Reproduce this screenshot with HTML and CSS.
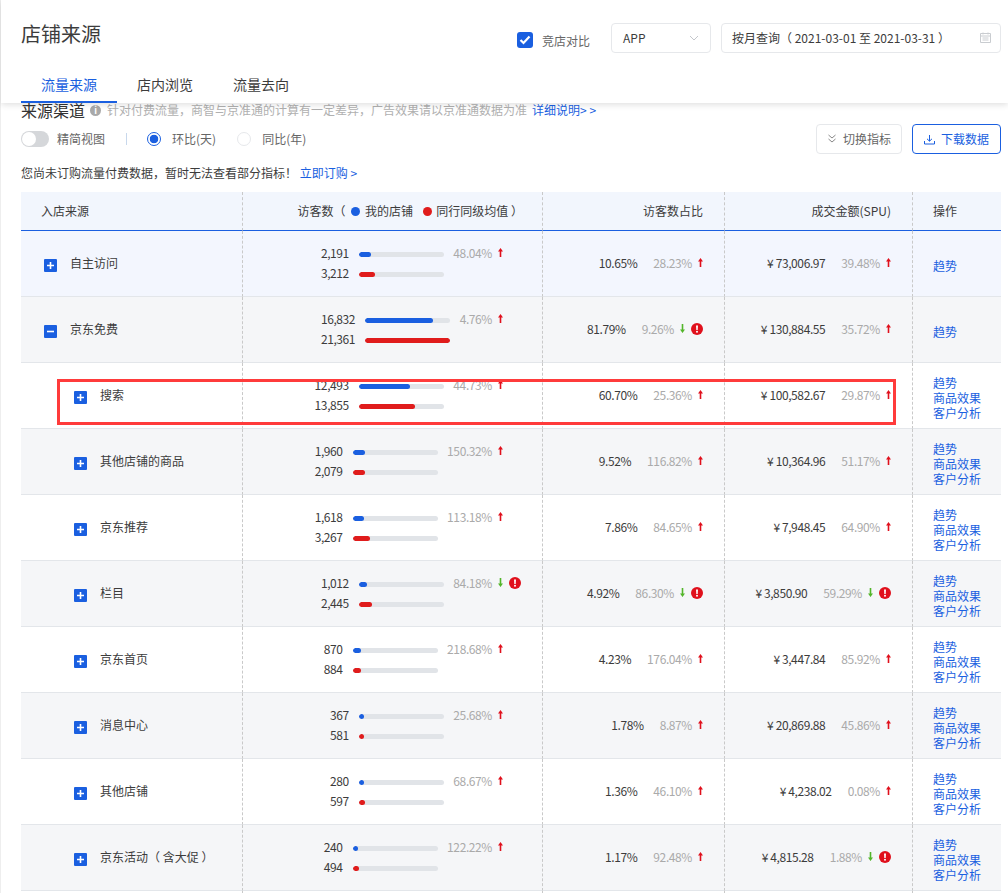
FILE: index.html
```html
<!DOCTYPE html>
<html lang="zh-CN">
<head>
    <meta charset="UTF-8">
    <title>店铺来源</title>
    <link rel="stylesheet" href="styles.css">
</head>
<body>
    <svg class="defs" width="0" height="0">
        <symbol id="up" viewBox="0 0 5 9"><path d="M2.5 0 5 3.4H3.3V9H1.7V3.4H0z" fill="#e0101c"/></symbol>
        <symbol id="down" viewBox="0 0 5 9"><path d="M2.5 9 5 5.6H3.3V0H1.7V5.6H0z" fill="#52b52a"/></symbol>
        <symbol id="alert" viewBox="0 0 12 12"><circle cx="6" cy="6" r="6" fill="#e0101c"/><path d="M5 2.4h2L6.7 7.1H5.3z" fill="#fff"/><circle cx="6" cy="8.8" r="1" fill="#fff"/></symbol>
        <symbol id="plus" viewBox="0 0 13 13"><rect width="13" height="13" rx="1" fill="#1a5fe0"/><path d="M3 6.5h7M6.5 3v7" stroke="#fff" stroke-width="1.6"/></symbol>
        <symbol id="minus" viewBox="0 0 13 13"><rect width="13" height="13" rx="1" fill="#1a5fe0"/><path d="M3 6.5h7" stroke="#fff" stroke-width="1.6"/></symbol>
    </svg>

    <header class="top">
        <div class="top-row">
            <h1>店铺来源</h1>
            <div class="filters">
                <span class="checkbox"><svg width="12" height="10" viewBox="0 0 12 10"><path d="M1.5 5 4.5 8l6-6.5" fill="none" stroke="#fff" stroke-width="2.2"/></svg></span>
                <span class="check-label">竞店对比</span>
                <div class="select">
                    <span>APP</span>
                    <svg width="10" height="6" viewBox="0 0 10 6"><path d="M1 1l4 4 4-4" fill="none" stroke="#c4c7cc"/></svg>
                </div>
                <div class="select date">
                    <span>按月查询（ 2021-03-01 至 2021-03-31 ）</span>
                    <svg width="11" height="11" viewBox="0 0 11 11"><path d="M.5 1.5h10v9H.5zM.5 4h10M2.5 6h6M2.5 8h6M3 .5v2M8 .5v2" fill="none" stroke="#c9ccd0"/></svg>
                </div>
            </div>
        </div>
        <nav class="tabs">
            <a class="tab active">流量来源</a>
            <a class="tab">店内浏览</a>
            <a class="tab">流量去向</a>
        </nav>
    </header>

    <main class="page">
        <div class="section-title">
            <h2>来源渠道</h2>
            <span class="info">i</span>
            <span class="hint">针对付费流量，商智与京准通的计算有一定差异，广告效果请以京准通数据为准</span>
            <a class="link">详细说明&gt; &gt;</a>
        </div>

        <div class="toolbar">
            <span class="switch"><i></i></span>
            <span class="opt-label">精简视图</span>
            <span class="sep"></span>
            <span class="radio on"></span>
            <span class="opt-label">环比(天)</span>
            <span class="radio"></span>
            <span class="opt-label">同比(年)</span>
            <div class="actions">
                <button class="btn">
                    <svg width="10" height="10" viewBox="0 0 10 10"><path d="M1.5 1 5 4l3.500-3M1.500 5 5 8l3.500-3" fill="none" stroke="#888"/></svg>
                    切换指标
                </button>
                <button class="btn primary">
                    <svg width="11" height="11" viewBox="0 0 11 11"><path d="M5.500 1v6M3 4.800l2.500 2.400L8 4.800M.5 7v3h10V7" fill="none" stroke="#1a5fe0"/></svg>
                    下载数据
                </button>
            </div>
        </div>

        <p class="notice">您尚未订购流量付费数据，暂时无法查看部分指标！ <a class="link">立即订购 &gt;</a></p>

        <div class="table-wrap">
            <table class="data">
                <colgroup><col class="c1"><col class="c2"><col class="c3"><col class="c4"><col class="c5"></colgroup>
                <thead>
                    <tr>
                        <th class="name">入店来源</th>
                        <th class="right visits">访客数（ <i class="dot blue"></i> 我的店铺 <i class="dot red"></i> 同行同级均值 ）</th>
                        <th class="right">访客数占比</th>
                        <th class="right">成交金额(SPU)</th>
                        <th class="ops">操作</th>
                    </tr>
                </thead>
                <tbody>
                    <tr class="first">
                        <td><div class="name"><svg class="tree"><use href="#plus"/></svg>自主访问</div></td>
                        <td><div class="metric">
                            <div class="nums"><div>2,191</div><div>3,212</div></div>
                            <div class="bars"><div class="bar"><i class="blue" style="width:12px"></i></div><div class="bar"><i class="red" style="width:16px"></i></div></div>
                            <div class="pct">48.04%</div>
                            <div class="slot"><svg class="arrow"><use href="#up"/></svg></div>
                        </div></td>
                        <td><div class="stat"><span class="val">10.65%</span><span class="pct">28.23%</span><svg class="arrow"><use href="#up"/></svg></div></td>
                        <td><div class="stat"><span class="val">¥ 73,006.97</span><span class="pct">39.48%</span><svg class="arrow"><use href="#up"/></svg></div></td>
                        <td class="ops"><a class="link">趋势</a></td>
                    </tr>
                    <tr class="grey">
                        <td><div class="name"><svg class="tree"><use href="#minus"/></svg>京东免费</div></td>
                        <td><div class="metric">
                            <div class="nums"><div>16,832</div><div>21,361</div></div>
                            <div class="bars"><div class="bar"><i class="blue" style="width:68px"></i></div><div class="bar"><i class="red" style="width:85px"></i></div></div>
                            <div class="pct">4.76%</div>
                            <div class="slot"><svg class="arrow"><use href="#up"/></svg></div>
                        </div></td>
                        <td><div class="stat"><span class="val">81.79%</span><span class="pct">9.26%</span><svg class="arrow"><use href="#down"/></svg><svg class="alert"><use href="#alert"/></svg></div></td>
                        <td><div class="stat"><span class="val">¥ 130,884.55</span><span class="pct">35.72%</span><svg class="arrow"><use href="#up"/></svg></div></td>
                        <td class="ops"><a class="link">趋势</a></td>
                    </tr>
                    <tr>
                        <td><div class="name sub"><svg class="tree"><use href="#plus"/></svg>搜索</div></td>
                        <td><div class="metric">
                            <div class="nums"><div>12,493</div><div>13,855</div></div>
                            <div class="bars"><div class="bar"><i class="blue" style="width:51px"></i></div><div class="bar"><i class="red" style="width:56px"></i></div></div>
                            <div class="pct">44.73%</div>
                            <div class="slot"><svg class="arrow"><use href="#up"/></svg></div>
                        </div></td>
                        <td><div class="stat"><span class="val">60.70%</span><span class="pct">25.36%</span><svg class="arrow"><use href="#up"/></svg></div></td>
                        <td><div class="stat"><span class="val">¥ 100,582.67</span><span class="pct">29.87%</span><svg class="arrow"><use href="#up"/></svg></div></td>
                        <td class="ops"><a class="link">趋势</a><a class="link">商品效果</a><a class="link">客户分析</a></td>
                    </tr>
                    <tr class="grey">
                        <td><div class="name sub"><svg class="tree"><use href="#plus"/></svg>其他店铺的商品</div></td>
                        <td><div class="metric">
                            <div class="nums"><div>1,960</div><div>2,079</div></div>
                            <div class="bars"><div class="bar"><i class="blue" style="width:12px"></i></div><div class="bar"><i class="red" style="width:12px"></i></div></div>
                            <div class="pct">150.32%</div>
                            <div class="slot"><svg class="arrow"><use href="#up"/></svg></div>
                        </div></td>
                        <td><div class="stat"><span class="val">9.52%</span><span class="pct">116.82%</span><svg class="arrow"><use href="#up"/></svg></div></td>
                        <td><div class="stat"><span class="val">¥ 10,364.96</span><span class="pct">51.17%</span><svg class="arrow"><use href="#up"/></svg></div></td>
                        <td class="ops"><a class="link">趋势</a><a class="link">商品效果</a><a class="link">客户分析</a></td>
                    </tr>
                    <tr>
                        <td><div class="name sub"><svg class="tree"><use href="#plus"/></svg>京东推荐</div></td>
                        <td><div class="metric">
                            <div class="nums"><div>1,618</div><div>3,267</div></div>
                            <div class="bars"><div class="bar"><i class="blue" style="width:11px"></i></div><div class="bar"><i class="red" style="width:17px"></i></div></div>
                            <div class="pct">113.18%</div>
                            <div class="slot"><svg class="arrow"><use href="#up"/></svg></div>
                        </div></td>
                        <td><div class="stat"><span class="val">7.86%</span><span class="pct">84.65%</span><svg class="arrow"><use href="#up"/></svg></div></td>
                        <td><div class="stat"><span class="val">¥ 7,948.45</span><span class="pct">64.90%</span><svg class="arrow"><use href="#up"/></svg></div></td>
                        <td class="ops"><a class="link">趋势</a><a class="link">商品效果</a><a class="link">客户分析</a></td>
                    </tr>
                    <tr class="grey">
                        <td><div class="name sub"><svg class="tree"><use href="#plus"/></svg>栏目</div></td>
                        <td><div class="metric">
                            <div class="nums"><div>1,012</div><div>2,445</div></div>
                            <div class="bars"><div class="bar"><i class="blue" style="width:8px"></i></div><div class="bar"><i class="red" style="width:13px"></i></div></div>
                            <div class="pct">84.18%</div>
                            <div class="slot"><svg class="arrow"><use href="#down"/></svg><svg class="alert"><use href="#alert"/></svg></div>
                        </div></td>
                        <td><div class="stat"><span class="val">4.92%</span><span class="pct">86.30%</span><svg class="arrow"><use href="#down"/></svg><svg class="alert"><use href="#alert"/></svg></div></td>
                        <td><div class="stat"><span class="val">¥ 3,850.90</span><span class="pct">59.29%</span><svg class="arrow"><use href="#down"/></svg><svg class="alert"><use href="#alert"/></svg></div></td>
                        <td class="ops"><a class="link">趋势</a><a class="link">商品效果</a><a class="link">客户分析</a></td>
                    </tr>
                    <tr>
                        <td><div class="name sub"><svg class="tree"><use href="#plus"/></svg>京东首页</div></td>
                        <td><div class="metric">
                            <div class="nums"><div>870</div><div>884</div></div>
                            <div class="bars"><div class="bar"><i class="blue" style="width:8px"></i></div><div class="bar"><i class="red" style="width:8px"></i></div></div>
                            <div class="pct">218.68%</div>
                            <div class="slot"><svg class="arrow"><use href="#up"/></svg></div>
                        </div></td>
                        <td><div class="stat"><span class="val">4.23%</span><span class="pct">176.04%</span><svg class="arrow"><use href="#up"/></svg></div></td>
                        <td><div class="stat"><span class="val">¥ 3,447.84</span><span class="pct">85.92%</span><svg class="arrow"><use href="#up"/></svg></div></td>
                        <td class="ops"><a class="link">趋势</a><a class="link">商品效果</a><a class="link">客户分析</a></td>
                    </tr>
                    <tr class="grey">
                        <td><div class="name sub"><svg class="tree"><use href="#plus"/></svg>消息中心</div></td>
                        <td><div class="metric">
                            <div class="nums"><div>367</div><div>581</div></div>
                            <div class="bars"><div class="bar"><i class="blue" style="width:5px"></i></div><div class="bar"><i class="red" style="width:5px"></i></div></div>
                            <div class="pct">25.68%</div>
                            <div class="slot"><svg class="arrow"><use href="#up"/></svg></div>
                        </div></td>
                        <td><div class="stat"><span class="val">1.78%</span><span class="pct">8.87%</span><svg class="arrow"><use href="#up"/></svg></div></td>
                        <td><div class="stat"><span class="val">¥ 20,869.88</span><span class="pct">45.86%</span><svg class="arrow"><use href="#up"/></svg></div></td>
                        <td class="ops"><a class="link">趋势</a><a class="link">商品效果</a><a class="link">客户分析</a></td>
                    </tr>
                    <tr>
                        <td><div class="name sub"><svg class="tree"><use href="#plus"/></svg>其他店铺</div></td>
                        <td><div class="metric">
                            <div class="nums"><div>280</div><div>597</div></div>
                            <div class="bars"><div class="bar"><i class="blue" style="width:5px"></i></div><div class="bar"><i class="red" style="width:6px"></i></div></div>
                            <div class="pct">68.67%</div>
                            <div class="slot"><svg class="arrow"><use href="#up"/></svg></div>
                        </div></td>
                        <td><div class="stat"><span class="val">1.36%</span><span class="pct">46.10%</span><svg class="arrow"><use href="#up"/></svg></div></td>
                        <td><div class="stat"><span class="val">¥ 4,238.02</span><span class="pct">0.08%</span><svg class="arrow"><use href="#up"/></svg></div></td>
                        <td class="ops"><a class="link">趋势</a><a class="link">商品效果</a><a class="link">客户分析</a></td>
                    </tr>
                    <tr class="grey">
                        <td><div class="name sub"><svg class="tree"><use href="#plus"/></svg>京东活动（ 含大促 ）</div></td>
                        <td><div class="metric">
                            <div class="nums"><div>240</div><div>494</div></div>
                            <div class="bars"><div class="bar"><i class="blue" style="width:5px"></i></div><div class="bar"><i class="red" style="width:6px"></i></div></div>
                            <div class="pct">122.22%</div>
                            <div class="slot"><svg class="arrow"><use href="#up"/></svg></div>
                        </div></td>
                        <td><div class="stat"><span class="val">1.17%</span><span class="pct">92.48%</span><svg class="arrow"><use href="#up"/></svg></div></td>
                        <td><div class="stat"><span class="val">¥ 4,815.28</span><span class="pct">1.88%</span><svg class="arrow"><use href="#down"/></svg><svg class="alert"><use href="#alert"/></svg></div></td>
                        <td class="ops"><a class="link">趋势</a><a class="link">商品效果</a><a class="link">客户分析</a></td>
                    </tr>
                    <tr><td></td><td></td><td></td><td></td><td></td></tr>
                </tbody>
            </table>
            <div class="highlight"></div>
        </div>
    </main>
</body>
</html>
```

FILE: styles.css
```css
html, body {
    height: 893px;
    overflow: hidden;
}
body {
    margin: 0;
    font-family: "Noto Sans CJK SC", "Noto Sans", sans-serif;
    font-size: 12px;
    line-height: 16px;
    color: #3c3c3c;
    background: #fff;
    border-left: 1px solid #eee;
    box-sizing: border-box;
}
.defs {
    position: absolute;
}
.link {
    color: #1a5fe0;
}

/* fixed head, lies over the page */
.top {
    position: absolute;
    top: 0;
    left: 1px;
    right: 0;
    height: 103px;
    background: #fff;
    box-shadow: 0 2px 6px rgba(0,0,0,0.12);
    z-index: 2;
}
.top-row {
    display: flex;
    justify-content: space-between;
    height: 66px;
    padding: 23px 7px 0 20px;
    box-sizing: border-box;
}
h1 {
    margin: 0;
    font-size: 20px;
    line-height: 22px;
    font-weight: 400;
}
.filters {
    display: flex;
    align-items: flex-start;
}
.checkbox {
    display: flex;
    align-items: center;
    justify-content: center;
    width: 16px;
    height: 16px;
    margin-top: 9px;
    border-radius: 3px;
    background: #1a5fe0;
}
.check-label {
    margin: 10px 21px 0 9px;
    color: #666;
}
.select {
    display: flex;
    align-items: center;
    justify-content: space-between;
    width: 100px;
    height: 30px;
    padding: 0 11px 1px;
    border: 1px solid #e6e8eb;
    border-radius: 4px;
    box-sizing: border-box;
    margin-right: 10px;
}
.select.date {
    width: 280px;
    margin-right: 0;
    padding: 0 9px 1px 10px;
}
.tabs {
    display: flex;
    height: 37px;
    padding-left: 20px;
}
.tab {
    width: 96px;
    text-align: center;
    font-size: 14px;
    line-height: 36px;
    box-sizing: border-box;
}
.tab.active {
    color: #1a5fe0;
    border-bottom: 2px solid #1a5fe0;
}

.page {
    padding: 102px 7px 0 20px;
}
.section-title {
    display: flex;
    align-items: center;
    height: 16px;
    color: #b0b0b0;
}
h2 {
    margin: 0;
    font-size: 16px;
    line-height: 16px;
    font-weight: 400;
    color: #333;
}
.info {
    width: 11px;
    height: 11px;
    margin: 0 6px 0 5px;
    border-radius: 50%;
    background: #a9a9a9;
    color: #fff;
    font-size: 9px;
    font-weight: 700;
    line-height: 11px;
    text-align: center;
}
.section-title .link {
    margin-left: 5px;
}

.toolbar {
    display: flex;
    align-items: center;
    height: 30px;
    margin-top: 6px;
}
.switch {
    width: 28px;
    height: 16px;
    border-radius: 8px;
    background: #d5d7da;
    margin-right: 8px;
}
.switch i {
    display: block;
    width: 14px;
    height: 14px;
    margin: 1px;
    border-radius: 50%;
    background: #fff;
}
.opt-label {
    color: #666;
}
.sep {
    width: 1px;
    height: 12px;
    margin: 0 20px 0 21px;
    background: #c8d8ec;
}
.radio {
    width: 14px;
    height: 14px;
    margin-right: 11px;
    border: 1px solid #e6e8eb;
    border-radius: 50%;
    box-sizing: border-box;
}
.opt-label + .radio {
    margin-left: 21px;
}
.radio.on {
    border-color: #1a5fe0;
    background: radial-gradient(circle, #1a5fe0 4px, #fff 4.6px);
}
.actions {
    display: flex;
    gap: 10px;
    margin-left: auto;
}
.btn {
    display: flex;
    align-items: center;
    justify-content: center;
    gap: 6px;
    width: 86px;
    height: 30px;
    padding: 0;
    font: inherit;
    color: #666;
    background: #fff;
    border: 1px solid #e6e8eb;
    border-radius: 4px;
}
.btn.primary {
    width: 89px;
    color: #1a5fe0;
    border-color: #1a5fe0;
}

.notice {
    margin: 11px 0 0;
    height: 16px;
}

/* table */
.table-wrap {
    position: relative;
    margin-top: 11px;
}
.data {
    table-layout: fixed;
    width: 980px;
    border-collapse: separate;
    border-spacing: 0;
}
.c1 { width: 221px; }
.c2 { width: 300px; }
.c3 { width: 182px; }
.c4 { width: 188px; }
.c5 { width: 89px; }
th, td {
    padding: 0;
    box-sizing: border-box;
    border-left: 1px dashed #c9c9c9;
}
th:first-child, td:first-child {
    border-left: none;
}
th {
    height: 39px;
    font-weight: 400;
    background: #f2f6fd;
    border-bottom: 1px solid #1a5fe0;
}
th.name {
    padding-left: 20px;
    text-align: left;
}
th.right {
    padding-right: 21px;
    text-align: right;
}
th.right.visits {
    padding-right: 19px;
}
th.ops {
    padding-left: 20px;
    text-align: left;
}
.dot {
    display: inline-block;
    width: 9px;
    height: 9px;
    margin: 0 2px 0 3px;
    border-radius: 50%;
}
.dot.red {
    margin-left: 7px;
}
.blue { background: #1a5fe0; }
.red { background: #e01c1c; }
td {
    height: 66px;
    padding-bottom: 2px;
    border-bottom: 1px solid #e3e6ea;
}
tr.first td { background: #f3f6fe; }
tr.grey td { background: #f5f6f8; }
.name {
    display: flex;
    align-items: center;
}
td .name {
    padding-left: 23px;
}
td .name.sub {
    padding-left: 53px;
}
.tree {
    width: 13px;
    height: 13px;
    margin-right: 13px;
    margin-top: 6px;
    flex: none;
}
.metric {
    display: flex;
    justify-content: flex-end;
    gap: 10px;
    line-height: 20px;
}
.nums {
    text-align: right;
    letter-spacing: -0.4px;
}
.bar {
    width: 85px;
    height: 5px;
    margin-top: 9px;
    border-radius: 3px;
    background: #e1e4e8;
    overflow: hidden;
}
.bars .bar + .bar {
    margin-top: 15px;
}
.bar i {
    display: block;
    height: 5px;
    border-radius: 3px;
}
.pct {
    color: #aaa;
    letter-spacing: -0.4px;
}
.metric .pct {
    margin-left: -0.5px;
}
.slot {
    display: flex;
    gap: 6px;
    width: 44px;
    margin-left: -4px;
    padding-top: 5px;
    align-items: flex-start;
}
.arrow {
    width: 5px;
    height: 9px;
    flex: none;
}
.alert {
    width: 12px;
    height: 12px;
    flex: none;
}
.slot .alert {
    margin-top: -1px;
}
.stat {
    display: flex;
    justify-content: flex-end;
    align-items: center;
    gap: 6px;
    padding-right: 21px;
}
.val {
    margin-right: 10px;
    letter-spacing: -0.4px;
}
td.ops {
    padding: 4px 0 0 20px;
    line-height: 15px;
}
td.ops .link {
    display: block;
}
.highlight {
    position: absolute;
    left: 36px;
    top: 187px;
    width: 839px;
    height: 46px;
    border: 3px solid #ff3b3b;
    box-sizing: border-box;
}
```
